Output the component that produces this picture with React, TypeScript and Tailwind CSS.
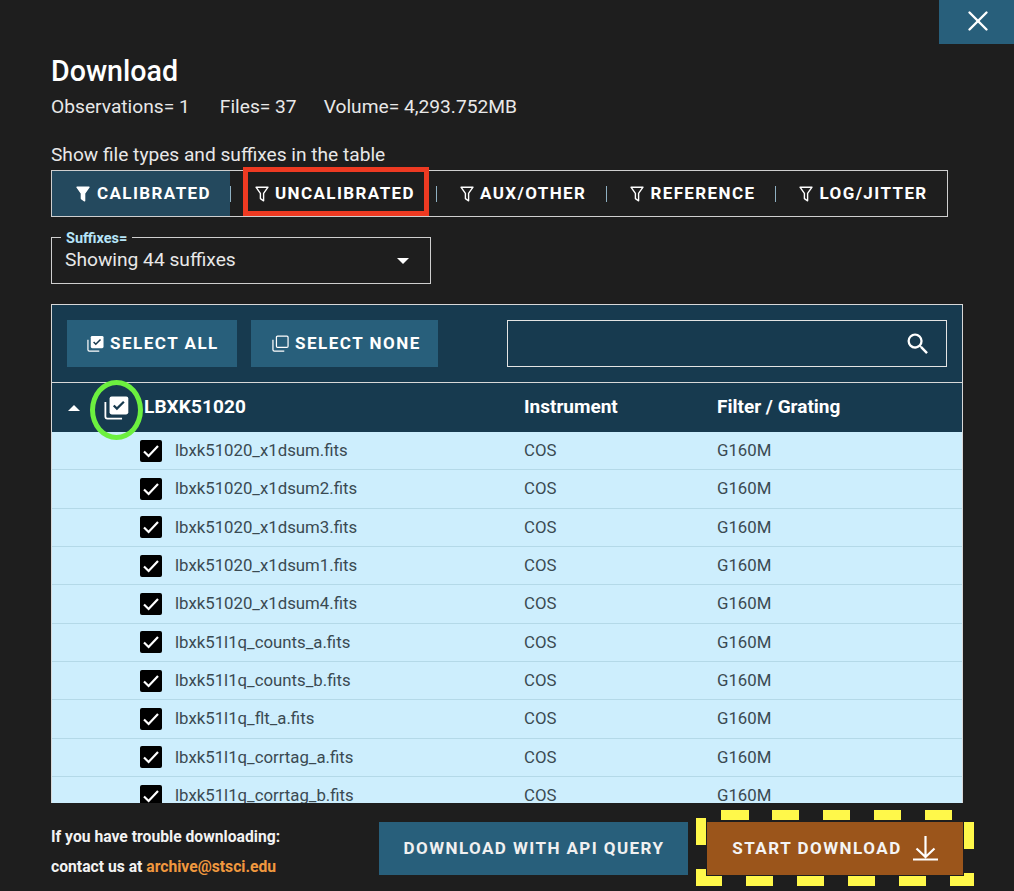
import { X } from "lucide-react";

const tabs = ["UNCALIBRATED", "AUX/OTHER", "REFERENCE", "LOG/JITTER"];

const files = [
  "lbxk51020_x1dsum.fits",
  "lbxk51020_x1dsum2.fits",
  "lbxk51020_x1dsum3.fits",
  "lbxk51020_x1dsum1.fits",
  "lbxk51020_x1dsum4.fits",
  "lbxk51l1q_counts_a.fits",
  "lbxk51l1q_counts_b.fits",
  "lbxk51l1q_flt_a.fits",
  "lbxk51l1q_corrtag_a.fits",
  "lbxk51l1q_corrtag_b.fits",
];

function Funnel({ filled }: { filled?: boolean }) {
  return (
    <svg width="14" height="16" viewBox="0 0 14 16" className="shrink-0">
      <path
        d="M1 1.200h12L8.600 7.400v7.400L5.400 12.600V7.400z"
        fill={filled ? "white" : "none"}
        stroke="white"
        strokeWidth="1.400"
        strokeLinejoin="round"
      />
    </svg>
  );
}

function CheckStack({ checked, size = 17 }: { checked?: boolean; size?: number }) {
  return (
    <svg width={size} height={size} viewBox="0 0 18 18" className="shrink-0">
      <path d="M1 5v10.500A1.500 1.500 0 0 0 2.500 17H13" fill="none" stroke="white" strokeWidth="1.300" />
      {checked ? (
        <>
          <rect x="4" y="1" width="13.500" height="13" rx="1.500" fill="white" />
          <path d="M7 7.500l2.300 2.300 5-5" fill="none" stroke="#173a4f" strokeWidth="1.600" />
        </>
      ) : (
        <rect x="4.700" y="1.200" width="12.300" height="12" rx="1.200" fill="none" stroke="white" strokeWidth="1.300" />
      )}
    </svg>
  );
}

function FileRow({ name }: { name: string }) {
  return (
    <div className="flex h-[38.33px] shrink-0 items-center border-b border-[#b4d9e8] text-[16.8px] text-[#3a4a52]">
      <div className="flex w-[472px] items-center pl-[88px]">
        <div className="flex h-[22px] w-[22px] items-center justify-center rounded-[2px] bg-black">
          <svg width="18" height="14" viewBox="0 0 18 14">
            <path d="M2 7.500l4.600 4.500L16 2" fill="none" stroke="white" strokeWidth="2.200" />
          </svg>
        </div>
        <span className="ml-[13px]">{name}</span>
      </div>
      <span className="w-[193px]">COS</span>
      <span>G160M</span>
    </div>
  );
}

export default function App() {
  return (
    <div className="relative h-[891px] w-[1014px] overflow-hidden bg-[#1e1e1e] font-['Roboto',sans-serif] text-white">
      <button className="absolute right-0 top-0 flex h-[44px] w-[75px] items-center justify-center bg-[#285f7b] pb-[3px] pl-[2px]">
        <X size={34} strokeWidth={1.700} />
      </button>

      <div className="px-[51px] pt-[53px]">
        <h1 className="text-[28.600px] font-medium leading-[36px]">Download</h1>
        <div className="mt-[6px] flex text-[19.200px] leading-[24px] text-[#e8e8e8]">
          <span>Observations= 1</span>
          <span className="ml-[30px]">Files= 37</span>
          <span className="ml-[27px]">Volume= 4,293.752MB</span>
        </div>

        <p className="mt-[24px] text-[19.150px] leading-[24px] text-[#e8e8e8]">Show file types and suffixes in the table</p>

        <div className="mt-[3px] flex h-[47px] w-[897px] items-center border border-[#cfcfcf] text-[17px] font-bold tracking-[1.400px]">
          <div className="flex h-full w-[178px] shrink-0 items-center gap-[7px] bg-[#24495e] pl-[24px]">
            <Funnel filled />
            <span>CALIBRATED</span>
          </div>
          {tabs.map((t) => (
            <div key={t} className="flex h-full shrink-0 items-center">
              <div className="h-[16px] w-px bg-[#8fb0c2]" />
              <div className={t === "UNCALIBRATED" ? "flex items-center gap-[6px] pl-[24px] pr-[21px]" : "flex items-center gap-[6px] pl-[23px] pr-[20px]"}>
                <Funnel />
                <span>{t}</span>
              </div>
            </div>
          ))}
        </div>

        <div className="relative mt-[20px] flex h-[47px] w-[380px] items-center justify-between border border-[#cfcfcf] pl-[13px] pr-[21px] text-[19.200px] text-[#e8e8e8]">
          <span className="absolute -top-[7px] left-[9px] bg-[#1e1e1e] px-[5px] text-[14.500px] font-bold leading-[15px] text-[#b5e4f8]">
            Suffixes=
          </span>
          <span>Showing 44 suffixes</span>
          <div className="h-0 w-0 border-x-[6px] border-t-[6px] border-x-transparent border-t-white" />
        </div>

        <div className="mt-[20px] h-[499px] w-[912px] overflow-hidden border-x border-t border-[#d8d8d8] bg-[#173a4f]">
          <div className="flex h-[78px] items-center gap-[14px] border-b border-[#d8d8d8] px-[15px]">
            <button className="flex h-[47px] w-[170px] items-center gap-[6px] bg-[#285f7b] pl-[20px] text-[17px] font-bold tracking-[1.500px]">
              <CheckStack checked />
              SELECT ALL
            </button>
            <button className="flex h-[47px] w-[187px] items-center gap-[6px] bg-[#285f7b] pl-[21px] text-[17px] font-bold tracking-[1.500px]">
              <CheckStack />
              SELECT NONE
            </button>
            <div className="ml-[55px] flex h-[47px] flex-1 items-center justify-end border border-[#e4e4e4] pr-[14px]">
              <svg width="28" height="28" viewBox="0 0 24 24" fill="white">
                <path d="M15.500 14h-.79l-.28-.27A6.471 6.471 0 0 0 16 9.500 6.500 6.500 0 1 0 9.500 16c1.610 0 3.090-.59 4.230-1.570l.27.28v.79l5 4.990L20.490 19l-4.990-5zm-6 0C7.010 14 5 11.990 5 9.500S7.010 5 9.500 5 14 7.010 14 9.500 11.990 14 9.500 14z" />
              </svg>
            </div>
          </div>

          <div className="flex h-[49px] items-center text-[19px] font-bold">
            <div className="flex w-[472px] items-center">
              <div className="ml-[16px] h-0 w-0 border-x-[6px] border-b-[6px] border-x-transparent border-b-white" />
              <div className="ml-[24px]">
                <CheckStack checked size={25} />
              </div>
              <span className="ml-[15px] tracking-[0.100px]">LBXK51020</span>
            </div>
            <span className="w-[193px]">Instrument</span>
            <span>Filter / Grating</span>
          </div>

          <div className="flex h-[372px] flex-col overflow-hidden bg-[#cdeefd]">
            {files.map((f) => (
              <FileRow key={f} name={f} />
            ))}
          </div>
        </div>

        <div className="mt-[19px] flex w-[912px] items-start">
          <div className="w-[328px] text-[15.700px] font-bold leading-[29.500px] text-[#f2f2f2]">
            <p>If you have trouble downloading:</p>
            <p>
              contact us at <a className="text-[#f0983e]">archive@stsci.edu</a>
            </p>
          </div>
          <button className="flex h-[53px] w-[309px] items-center justify-center bg-[#285f7b] pl-px text-[17px] font-bold tracking-[1.430px] text-[#f0f0f0]">
            DOWNLOAD WITH API QUERY
          </button>
          <button className="relative ml-[19px] flex h-[53px] w-[256px] items-center justify-center gap-[11px] bg-[#9b551b] text-[17px] font-bold tracking-[1.500px] text-[#f4f4f4]">
            START DOWNLOAD
            <svg width="25" height="25" viewBox="0 0 25 25">
              <path d="M12.500 0v21M3.500 12.500l9 8.500 9-8.500M0 23.500h25" fill="none" stroke="white" strokeWidth="2.200" />
            </svg>
            {/* dashes are laid out by hand, they don't follow one even period round the corners */}
            <svg className="absolute -left-[11px] -top-[12px]" width="278" height="76" viewBox="0 0 278 76">
              <path
                d="M25 5h28M76 5h27M127 5h27M178 5h27M229 5h27M5 8v27M5 59v17M0 71h26M50 71h27M101 71h27M152 71h27M203 71h27M254 71h24M273 12v27M273 63v13"
                fill="none"
                stroke="#fff84a"
                strokeWidth="10"
              />
            </svg>
          </button>
        </div>
      </div>

      {/* annotations drawn over the page */}
      <div className="absolute left-[243px] top-[167px] h-[49px] w-[186px] border-[5px] border-[#ee3a22]" />
      <div className="absolute left-[90px] top-[380px] h-[60px] w-[53px] rounded-[50%] border-[5px] border-[#6cf03f]" />
    </div>
  );
}
